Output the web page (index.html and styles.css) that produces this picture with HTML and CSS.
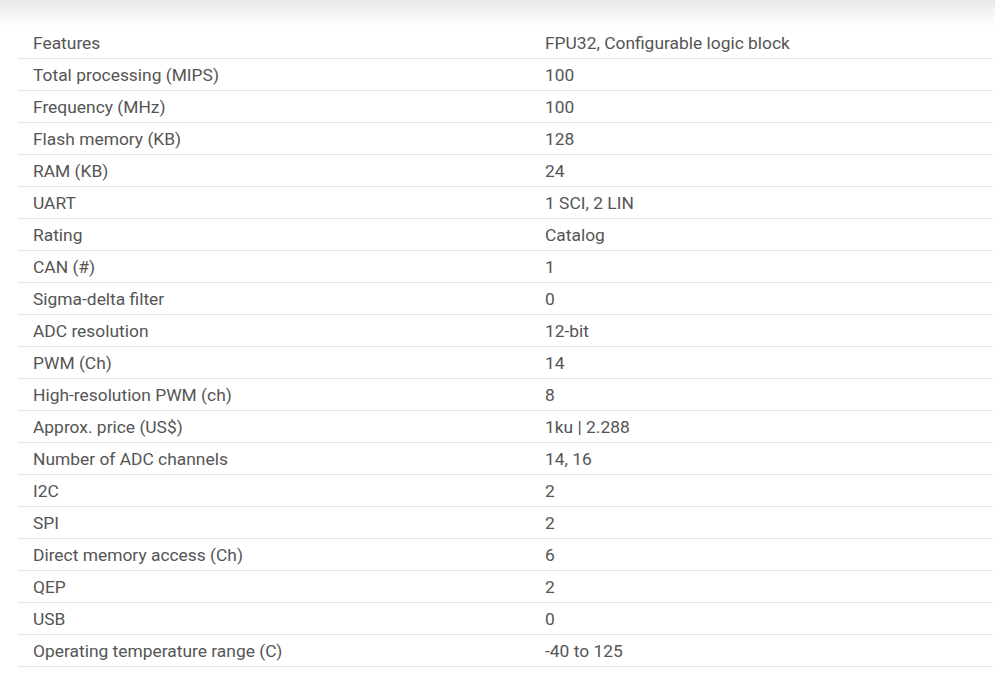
FILE: index.html
```html
<!DOCTYPE html>
<html>
<head>
<meta charset="utf-8">
<link rel="stylesheet" href="styles.css">
</head>
<body>
<div class="shade"></div>
<div class="specs">
  <div class="row"><div class="k">Features</div><div class="v">FPU32, Configurable logic block</div></div>
  <div class="row"><div class="k">Total processing (MIPS)</div><div class="v">100</div></div>
  <div class="row"><div class="k">Frequency (MHz)</div><div class="v">100</div></div>
  <div class="row"><div class="k">Flash memory (KB)</div><div class="v">128</div></div>
  <div class="row"><div class="k">RAM (KB)</div><div class="v">24</div></div>
  <div class="row"><div class="k">UART</div><div class="v">1 SCI, 2 LIN</div></div>
  <div class="row"><div class="k">Rating</div><div class="v">Catalog</div></div>
  <div class="row"><div class="k">CAN (#)</div><div class="v">1</div></div>
  <div class="row"><div class="k">Sigma-delta filter</div><div class="v">0</div></div>
  <div class="row"><div class="k">ADC resolution</div><div class="v">12-bit</div></div>
  <div class="row"><div class="k">PWM (Ch)</div><div class="v">14</div></div>
  <div class="row"><div class="k">High-resolution PWM (ch)</div><div class="v">8</div></div>
  <div class="row"><div class="k">Approx. price (US$)</div><div class="v">1ku | 2.288</div></div>
  <div class="row"><div class="k">Number of ADC channels</div><div class="v">14, 16</div></div>
  <div class="row"><div class="k">I2C</div><div class="v">2</div></div>
  <div class="row"><div class="k">SPI</div><div class="v">2</div></div>
  <div class="row"><div class="k">Direct memory access (Ch)</div><div class="v">6</div></div>
  <div class="row"><div class="k">QEP</div><div class="v">2</div></div>
  <div class="row"><div class="k">USB</div><div class="v">0</div></div>
  <div class="row"><div class="k">Operating temperature range (C)</div><div class="v">-40 to 125</div></div>
</div>
</body>
</html>
```
FILE: styles.css
```css
html, body {
  margin: 0;
  padding: 0;
  background: #fff;
}
body {
  font-family: Roboto, "Liberation Sans", Arial, sans-serif;
  font-size: 17.4px;
  color: #555;
}
.shade {
  height: 27px;
  background: linear-gradient(to bottom, #e8e8e8 0%, #f6f6f6 55%, #fff 100%);
}
.specs {
  margin: 0 2px 0 18px;
}
.row {
  display: grid;
  grid-template-columns: 512px 1fr;
  height: 31px;
  align-items: center;
  border-bottom: 1px solid #e4e4e4;
}
.k, .v {
  padding-left: 15px;
  line-height: 20px;
}
```
